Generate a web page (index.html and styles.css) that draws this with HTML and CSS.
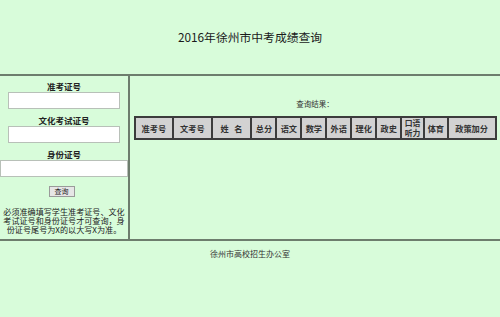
FILE: index.html
```html
<!DOCTYPE html>
<html lang="zh">
<head>
<meta charset="utf-8">
<title>2016年徐州市中考成绩查询</title>
<link rel="stylesheet" href="styles.css">
</head>
<body>
<div class="header"><h1 class="title">2016年徐州市中考成绩查询</h1></div>
<div class="main">
  <form class="side">
    <label class="lbl">准考证号</label>
    <input class="field" type="text">
    <label class="lbl">文化考试证号</label>
    <input class="field" type="text">
    <label class="lbl">身份证号</label>
    <input class="field wide" type="text">
    <button class="btn" type="button">查询</button>
    <p class="note">必须准确填写学生准考证号、文化考试证号和身份证号才可查询，身份证号尾号为X的以大写X为准。</p>
  </form>
  <div class="result">
    <div class="result-title">查询结果：</div>
    <table class="scores">
      <colgroup>
        <col class="w-id">
        <col class="w-id">
        <col class="w-name">
        <col class="w-sub">
        <col class="w-sub">
        <col class="w-sub">
        <col class="w-sub">
        <col class="w-sub">
        <col class="w-sub">
        <col class="w-oral">
        <col class="w-pe">
        <col class="w-bonus">
      </colgroup>
      <tr>
        <th>准考号</th>
        <th>文考号</th>
        <th>姓&nbsp;&nbsp;&nbsp;名</th>
        <th>总分</th>
        <th>语文</th>
        <th>数学</th>
        <th>外语</th>
        <th>理化</th>
        <th>政史</th>
        <th class="two-line">口语<br>听力</th>
        <th>体育</th>
        <th>政策加分</th>
      </tr>
    </table>
  </div>
</div>
<div class="footer">徐州市高校招生办公室</div>
</body>
</html>
```
FILE: styles.css
```css
html, body {
  margin: 0;
  padding: 0;
  background: #d8fcda;
  color: #222;
  font-family: "Noto Sans CJK SC", "DejaVu Sans", sans-serif;
}
.header {
  height: 74px;
  display: flex;
  align-items: center;
  justify-content: center;
}
.title {
  margin: 0;
  font-size: 11.8px;
  font-weight: normal;
  line-height: 14px;
  color: #1a1a1a;
}
.main {
  display: flex;
  height: 163px;
  border-top: 2px solid #6d7d6d;
  border-bottom: 2px solid #6d7d6d;
}
.side {
  width: 128px;
  flex: none;
  border-right: 2px solid #6d7d6d;
  margin: 0;
  padding-top: 5px;
  display: flex;
  flex-direction: column;
  align-items: center;
}
.lbl {
  display: block;
  font-size: 8.5px;
  line-height: 11px;
  font-weight: bold;
  color: #222;
  text-align: center;
}
.field {
  box-sizing: border-box;
  width: 112px;
  height: 17px;
  margin: 0 0 6px 0;
  padding: 0;
  border: 1px solid #b8c0b8;
  background: #fff;
}
.field.wide {
  width: 128px;
  margin-bottom: 0;
}
.btn {
  margin-top: 9px;
  margin-left: -5px;
  height: 11px;
  padding: 0 5px;
  font-family: "Noto Sans CJK SC", sans-serif;
  font-size: 7px;
  line-height: 9px;
  background: #e6e6e6;
  border: 1px solid #9a9a9a;
  color: #222;
}
.note {
  margin: 10px 0 0;
  width: 128px;
  font-size: 8.1px;
  line-height: 9px;
  text-align: center;
  color: #222;
}
.result {
  flex: 1;
  padding-top: 23px;
  display: flex;
  flex-direction: column;
  align-items: center;
}
.result-title {
  font-size: 7.5px;
  line-height: 10px;
  color: #333;
  margin-bottom: 7px;
}
.scores {
  border-collapse: collapse;
  table-layout: fixed;
  width: 363px;
  border: 2px solid #3c3c3c;
}
.w-id { width: 34px; }
.w-name { width: 35px; }
.w-sub { width: 22px; }
.w-oral { width: 20px; }
.w-pe { width: 21px; }
.w-bonus { width: 42px; }
.scores th {
  background: #d2d2d2;
  border: 2px solid #3c3c3c;
  padding: 0;
  height: 20px;
  font-size: 8.2px;
  line-height: 10px;
  font-weight: bold;
  color: #333;
  text-align: center;
  white-space: nowrap;
  overflow: hidden;
}
.scores th.two-line {
  font-size: 7.8px;
  line-height: 10px;
}
.footer {
  padding-top: 8px;
  text-align: center;
  font-size: 8px;
  line-height: 10px;
  color: #333;
}
```
